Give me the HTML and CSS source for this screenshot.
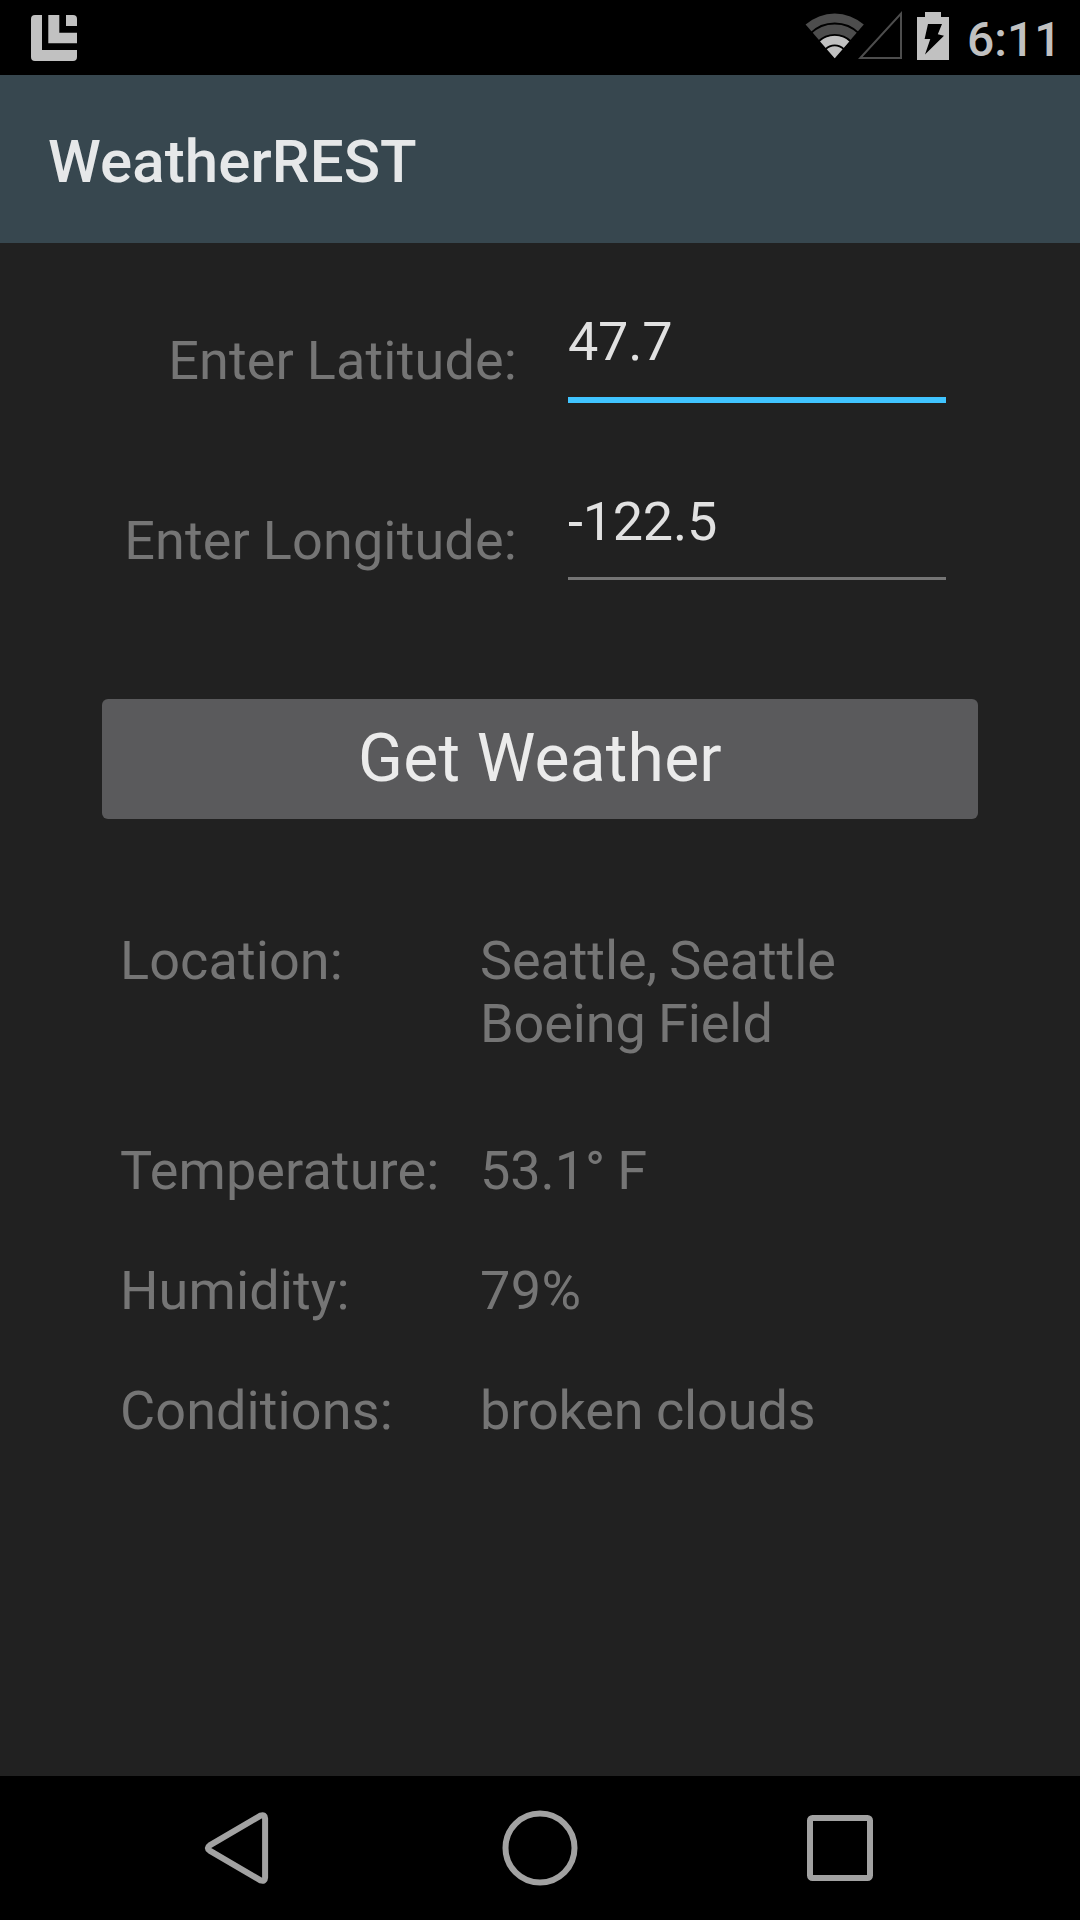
FILE: index.html
```html
<!DOCTYPE html>
<html lang="en">
<head>
<meta charset="utf-8">
<title>WeatherREST</title>
<link rel="stylesheet" href="styles.css">
</head>
<body>
<div class="screen">
  <header class="status-bar">
    <svg class="notification-icon" width="46" height="46" viewBox="0 0 46 46">
      <path d="M4 0H11V35H46V42A4 4 0 0 1 42 46H4A4 4 0 0 1 0 42V4A4 4 0 0 1 4 0Z"/>
      <path d="M17.3 0H28.3V17.7H46V28.3H17.3Z"/>
      <path d="M35 0H42A4 4 0 0 1 46 4V11H35Z"/>
    </svg>
    <svg class="system-icons" width="150" height="50" viewBox="800 11 150 50">
      <path class="dim" d="M834.7 58.3L805.6 24.6A44 44 0 0 1 863.8 24.6Z"/>
      <path class="lit" d="M834.7 58.3L819.7 41A23.4 23.4 0 0 1 849.7 41Z"/>
      <g class="gap">
        <circle cx="834.7" cy="58.3" r="34.8"/>
        <circle cx="834.7" cy="58.3" r="23.4"/>
        <circle cx="834.7" cy="58.3" r="12.9"/>
      </g>
      <path class="signal" d="M860.3 58L901 13.6V58Z"/>
      <path class="lit" d="M925 12H941V17H949V60H917V17H925Z"/>
      <path class="bolt" d="M928 24H942L937.8 34.3L944 35.7L925 54.5L930.3 39H924.6Z"/>
    </svg>
    <time class="clock">6:11</time>
  </header>
  <div class="app-bar"><h1 class="app-title">WeatherREST</h1></div>
  <main class="content">
    <div class="form">
      <div class="label">Enter Latitude:</div>
      <div class="field field-active">47.7</div>
      <div class="label">Enter Longitude:</div>
      <div class="field">-122.5</div>
    </div>
    <button class="submit" type="button">Get Weather</button>
    <dl class="results">
      <dt>Location:</dt><dd class="location">Seattle, Seattle Boeing Field</dd>
      <dt>Temperature:</dt><dd>53.1° F</dd>
      <dt>Humidity:</dt><dd class="humidity">79%</dd>
      <dt>Conditions:</dt><dd>broken clouds</dd>
    </dl>
  </main>
  <nav class="nav-bar">
    <svg width="80" height="80" viewBox="0 0 80 80"><path d="M9.7 37.4L60.6 7.6Q64.9 6.2 65.1 10.5V69.5Q64.9 73.8 60.6 72.4L9.7 42.6Q5.9 40 9.7 37.4Z"/></svg>
    <svg width="80" height="80" viewBox="0 0 80 80"><circle cx="40" cy="40" r="34.5"/></svg>
    <svg width="80" height="80" viewBox="0 0 80 80"><rect x="10" y="10" width="60" height="60" rx="2.5"/></svg>
  </nav>
</div>
</body>
</html>
```
FILE: styles.css
```css
body {
  margin: 0;
  background: #212121;
  font-family: Roboto, "Liberation Sans", sans-serif;
}

.screen {
  display: flex;
  flex-direction: column;
  width: 1080px;
  height: 1920px;
  overflow: hidden;
}

.status-bar {
  display: flex;
  align-items: flex-start;
  box-sizing: border-box;
  height: 75px;
  padding: 11px 24px 0 31px;
  background: #000;
  color: #c1c1c1;
}

.notification-icon {
  margin-top: 4px;
  fill: #c1c1c1;
}

.system-icons {
  margin-left: auto;
}

.dim { fill: #4d4d4d; }
.lit { fill: #c1c1c1; }
.gap { fill: none; stroke: #000; stroke-width: 1.9; }
.signal { fill: none; stroke: #4d4d4d; stroke-width: 2; }
.bolt { fill: #000; }

.clock {
  width: 89px;
  margin-top: 1px;
  margin-left: 17px;
  font-size: 48px;
  line-height: 56px;
  font-weight: 500;
}

.app-bar {
  display: flex;
  align-items: center;
  box-sizing: border-box;
  height: 168px;
  padding: 6px 48px 0;
  background: #37474f;
}

.app-title {
  margin: 0;
  color: #e6e8e9;
  font-size: 60px;
  line-height: 70px;
  font-weight: 500;
  letter-spacing: 0.1px;
}

.content {
  flex: 1;
  padding: 67px 102px 0;
}

.form {
  display: grid;
  grid-template-columns: 415px 378px;
  grid-auto-rows: 93px;
  column-gap: 51px;
  row-gap: 87px;
}

.label,
.field,
.results {
  font-size: 54px;
  line-height: 63px;
}

.label {
  padding-top: 19px;
  color: #757575;
  letter-spacing: 0.15px;
  word-spacing: -0.8px;
  text-align: right;
  white-space: nowrap;
}

.field {
  align-self: start;
  box-sizing: border-box;
  height: 90px;
  border-bottom: 3px solid #757575;
  color: #e1e1e1;
  letter-spacing: -0.25px;
}

.field-active {
  height: 93px;
  border-bottom: 6px solid #40c4ff;
}

.submit {
  display: block;
  width: 876px;
  height: 120px;
  margin: 116px 0 0;
  padding: 0 0 1px;
  border: 0;
  border-radius: 6px;
  background: #5a5a5c;
  color: #ebebeb;
  font: 400 66px/78px Roboto, "Liberation Sans", sans-serif;
  letter-spacing: 0.2px;
}

.results {
  display: grid;
  grid-template-columns: 360px 400px;
  row-gap: 57px;
  margin: 110px 0 0;
  padding-left: 18px;
  color: #757575;
}

.results dt {
  letter-spacing: 0.1px;
}

.results dd {
  margin: 0;
  letter-spacing: -0.1px;
  word-spacing: -1px;
}

.results .humidity {
  letter-spacing: 0.4px;
}

.results .location {
  min-height: 153px;
}

.nav-bar {
  display: flex;
  justify-content: center;
  gap: 220px;
  box-sizing: border-box;
  height: 144px;
  padding-top: 32px;
  background: #000;
}

.nav-bar svg {
  fill: none;
  stroke: #a2a2a2;
  stroke-width: 6;
}
```
